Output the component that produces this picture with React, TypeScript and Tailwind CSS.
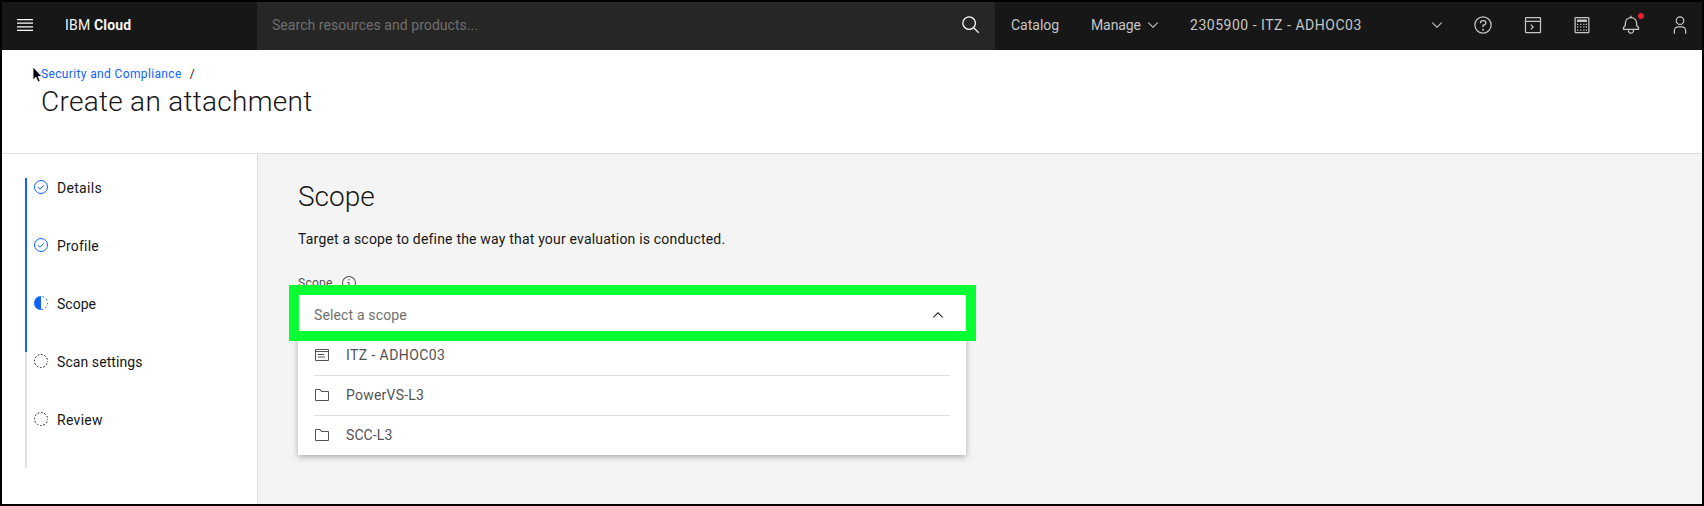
import React from "react";

const sans = "font-['Roboto','Liberation_Sans',sans-serif]";

function Icon({ children, size = 20, className = "", viewBox = "0 0 32 32" }: { children: React.ReactNode; size?: number; className?: string; viewBox?: string }) {
  return (
    <svg width={size} height={size} viewBox={viewBox} fill="currentColor" className={"shrink-0 " + className}>
      {children}
    </svg>
  );
}

const CHEVRON = "M8 11L3 6 3.7 5.3 8 9.6 12.3 5.3 13 6z";

function Header() {
  return (
    <header className="flex h-12 shrink-0 items-center bg-[#171717] pb-[2px] text-[14px] leading-[18px] text-[#c6c6c6]">
      <div className="flex w-[255px] items-center pl-[15px]">
        <svg width="16" height="12" viewBox="0 0 16 12" fill="#fff">
          <path d="M0 0H16V1.2H0zM0 3.6H16V4.8H0zM0 7.2H16V8.4H0zM0 10.8H16V12H0z" />
        </svg>
        <div className="ml-8 whitespace-nowrap tracking-[0.18px] text-[#f4f4f4]">
          IBM <span className="font-bold">Cloud</span>
        </div>
      </div>
      <div className="-mb-[2px] flex h-12 w-[738px] items-center justify-between bg-[#262626] pb-[2px] pl-[15px] pr-[14px]">
        <span className="tracking-[0.05px] text-[#6f6f6f]">Search resources and products...</span>
        <Icon className="text-[#f4f4f4]">
          <path d="M29,27.5859l-7.5521-7.5521a11.0177,11.0177,0,1,0-1.4141,1.4141L27.5859,29ZM4,13a9,9,0,1,1,9,9A9.01,9.01,0,0,1,4,13Z" />
        </Icon>
      </div>
      <span className="ml-4 w-[80px]">Catalog</span>
      <span className="w-[54px] tracking-[-0.1px]">Manage</span>
      <Icon size={16} viewBox="0 0 16 16"><path d={CHEVRON} /></Icon>
      <span className="ml-[29px] w-[239px] whitespace-nowrap tracking-[0.52px]">2305900 - ITZ - ADHOC03</span>
      <Icon size={16} viewBox="0 0 16 16"><path d={CHEVRON} /></Icon>
      <div className="ml-[28px] flex items-center gap-[29px]">
        <Icon className="mr-[1px]">
          <path d="M16,2A14,14,0,1,0,30,16,14,14,0,0,0,16,2Zm0,26A12,12,0,1,1,28,16,12,12,0,0,1,16,28Z" />
          <circle cx="16" cy="23.5" r="1.5" />
          <path d="M17,8H15.5A4.49,4.49,0,0,0,11,12.5V13h2v-.5A2.5,2.5,0,0,1,15.5,10H17a2.5,2.5,0,0,1,0,5H15v4.5h2V17a4.5,4.5,0,0,0,0-9Z" />
        </Icon>
        <Icon>
          <path fillRule="evenodd" d="M5 3H27a2 2 0 0 1 2 2V27a2 2 0 0 1-2 2H5a2 2 0 0 1-2-2V5a2 2 0 0 1 2-2ZM5 5V9H27V5ZM5 11V27H27V11Z" />
          <path d="M13.2 23.4L11.8 22 14.8 19 11.8 16 13.2 14.6 17.6 19z" />
        </Icon>
        <Icon>
          <path fillRule="evenodd" d="M6 3H26a2 2 0 0 1 2 2V27a2 2 0 0 1-2 2H6a2 2 0 0 1-2-2V5a2 2 0 0 1 2-2ZM6 5V27H26V5Z" />
          <path d="M8 7H24V11H8ZM8 14h2v2H8ZM13 14h2v2H13ZM18 14h2v2H18ZM22 14h2v2H22ZM8 18h2v2H8ZM13 18h2v2H13ZM18 18h2v2H18ZM22 18h2v2H22ZM8 23h2v2H8ZM13 23h2v2H13ZM18 23h2v2H18ZM22 23h2v2H22Z" />
        </Icon>
        <div className="relative">
          <Icon>
            <path d="M28.7071,19.293,26,16.5859V13a10.0136,10.0136,0,0,0-9-9.9492V1H15V3.0508A10.0136,10.0136,0,0,0,6,13v3.5859L3.2929,19.293A1,1,0,0,0,3,20v3a1,1,0,0,0,1,1h7v.7768a5.152,5.152,0,0,0,4.5,5.1987A5.0057,5.0057,0,0,0,21,25V24h7a1,1,0,0,0,1-1V20A1,1,0,0,0,28.7071,19.293ZM19,25a3,3,0,0,1-6,0V24h6Zm8-3H5V20.4141L7.707,17.707A1,1,0,0,0,8,17V13a8,8,0,0,1,16,0v4a1,1,0,0,0,.293.707L27,20.4141Z" />
          </Icon>
          <span className="absolute -top-[2px] left-[17px] size-[6px] rounded-full bg-[#e8202a]" />
        </div>
        <Icon>
          <path d="M16 4a5 5 0 1 1-5 5 5 5 0 0 1 5-5m0-2a7 7 0 1 0 7 7A7 7 0 0 0 16 2ZM26 30H24V25a5 5 0 0 0-5-5H13a5 5 0 0 0-5 5v5H6V25a7 7 0 0 1 7-7h6a7 7 0 0 1 7 7Z" />
        </Icon>
      </div>
    </header>
  );
}

type StepState = "complete" | "current" | "incomplete";

function StepIcon({ state }: { state: StepState }) {
  return (
    <svg width="16" height="16" viewBox="0 0 16 16" fill="none" className={state === "incomplete" ? "text-[#161616]" : "text-[#0f62fe]"}>
      {state === "complete" && (
        <>
          <circle cx="8" cy="8" r="6.5" stroke="currentColor" />
          <path d="M5 8.2L7 10.2L11 6.2" stroke="currentColor" />
        </>
      )}
      {state === "current" && (
        <>
          <path d="M8 1A7 7 0 0 0 8 15Z" fill="currentColor" />
          <path d="M8 1.5A6.5 6.5 0 0 1 8 14.5" stroke="currentColor" strokeDasharray="1.8 2.28" strokeDashoffset="-1.5" />
        </>
      )}
      {state === "incomplete" && <circle cx="8" cy="8" r="6.5" stroke="currentColor" strokeDasharray="1.7 1.703" strokeDashoffset="0.85" />}
    </svg>
  );
}

const steps: { label: string; state: StepState; tracking: string }[] = [
  { label: "Details", state: "complete", tracking: "tracking-[0.3px]" },
  { label: "Profile", state: "complete", tracking: "tracking-[0.2px]" },
  { label: "Scope", state: "current", tracking: "tracking-[0px]" },
  { label: "Scan settings", state: "incomplete", tracking: "tracking-[0.08px]" },
  { label: "Review", state: "incomplete", tracking: "tracking-[0.3px]" },
];

const FOLDER = (
  <path d="M11.17,6l3.42,3.41.58.59H28V26H4V6h7.17m0-2H4A2,2,0,0,0,2,6V26a2,2,0,0,0,2,2H28a2,2,0,0,0,2-2V10a2,2,0,0,0-2-2H16L12.59,4.59A2,2,0,0,0,11.17,4Z" />
);
const ACCOUNT = (
  <path fillRule="evenodd" d="M4 4H28a2 2 0 0 1 2 2V26a2 2 0 0 1-2 2H4a2 2 0 0 1-2-2V6a2 2 0 0 1 2-2ZM4 6V8H28V6ZM4 10V26H28V10ZM8 14H20V16H8ZM8 19H22V21H8Z" />
);

const options = [
  { label: "ITZ - ADHOC03", icon: ACCOUNT, tracking: "tracking-[0.41px]" },
  { label: "PowerVS-L3", icon: FOLDER, tracking: "tracking-[0.22px]" },
  { label: "SCC-L3", icon: FOLDER, tracking: "tracking-[0.1px]" },
];

export default function App() {
  return (
    <div className={"relative flex h-[506px] w-[1704px] flex-col overflow-hidden border-2 border-black bg-white text-[#161616] " + sans}>
      <Header />
      <div className="h-[104px] shrink-0 border-b border-[#e0e0e0] pl-[39px] pt-[16px]">
        <div className="flex text-[12px] leading-4">
          <a className="tracking-[0.36px] text-[#0f62fe]">Security and Compliance</a>
          <span className="ml-[8px]">/</span>
        </div>
        <h1 className="mt-[2px] text-[28px] font-light leading-9 tracking-[0.28px]">Create an attachment</h1>
      </div>
      <svg width="12" height="18" viewBox="0 0 12 18" className="absolute left-[30px] top-[64px]">
        <path d="M1 1V14L4 11.2L6 16L8.2 15L6.2 10.5H10Z" fill="#000" stroke="#fff" strokeWidth="0.8" />
      </svg>
      <div className="flex min-h-0 flex-1">
        <aside className="flex w-[256px] border-r border-[#e0e0e0] pl-[23px] pt-[24px]">
          <div className="w-[2px]">
            <div className="h-[174px] bg-[#0f62fe]" />
            <div className="h-[116px] bg-[#e0e0e0]" />
          </div>
          <ol className="pl-[6px]">
            {steps.map((s) => (
              <li key={s.label} className="flex h-[58px] pt-[1px]">
                <StepIcon state={s.state} />
                <span className={"ml-2 text-[14px] leading-[18px] " + s.tracking}>{s.label}</span>
              </li>
            ))}
          </ol>
        </aside>
        <main className="flex-1 bg-[#f4f4f4] pl-[40px] pt-[25px]">
          <h2 className="text-[28px] font-light leading-9">Scope</h2>
          <p className="mt-[14px] text-[14px] leading-5 tracking-[0.19px]">Target a scope to define the way that your evaluation is conducted.</p>
          <div className="mt-[26px] flex h-4 text-[#525252]">
            <span className="w-[43px] text-[12px] leading-[16px] tracking-[0.28px]">Scope</span>
            <Icon size={16}>
              <path d="M17 22V14H13V16H15V22H12V24H20V22ZM16 8a1.5 1.5 0 1 0 1.5 1.5A1.5 1.5 0 0 0 16 8Z" />
              <path d="M16,30A14,14,0,1,1,30,16,14,14,0,0,1,16,30ZM16,4A12,12,0,1,0,28,16,12,12,0,0,0,16,4Z" />
            </Icon>
          </div>
          <div className="relative z-10 -ml-[9px] -mt-[6px] flex h-[56px] w-[687px] items-center justify-between border-[10px] border-[#08ff34] bg-white pl-[15px] pr-[20px]">
            <span className="pt-[3px] text-[14px] leading-[18px] tracking-[0.14px] text-[#6f6f6f]">Select a scope</span>
            <Icon size={16} viewBox="0 0 16 16" className="mt-[3px] rotate-180 text-[#161616]"><path d={CHEVRON} /></Icon>
          </div>
          <ul className="-mt-[6px] h-[120px] w-[668px] bg-white px-4 text-[#525252] shadow-[0_2px_6px_rgba(0,0,0,0.3)]">
            {options.map((o) => (
              <li key={o.label} className="flex h-10 items-center border-t border-[#e0e0e0] pb-[1px] first:border-t-0 first:pb-0">
                <Icon size={16}>{o.icon}</Icon>
                <span className={"ml-4 text-[14px] leading-[18px] " + o.tracking}>{o.label}</span>
              </li>
            ))}
          </ul>
        </main>
      </div>
    </div>
  );
}
